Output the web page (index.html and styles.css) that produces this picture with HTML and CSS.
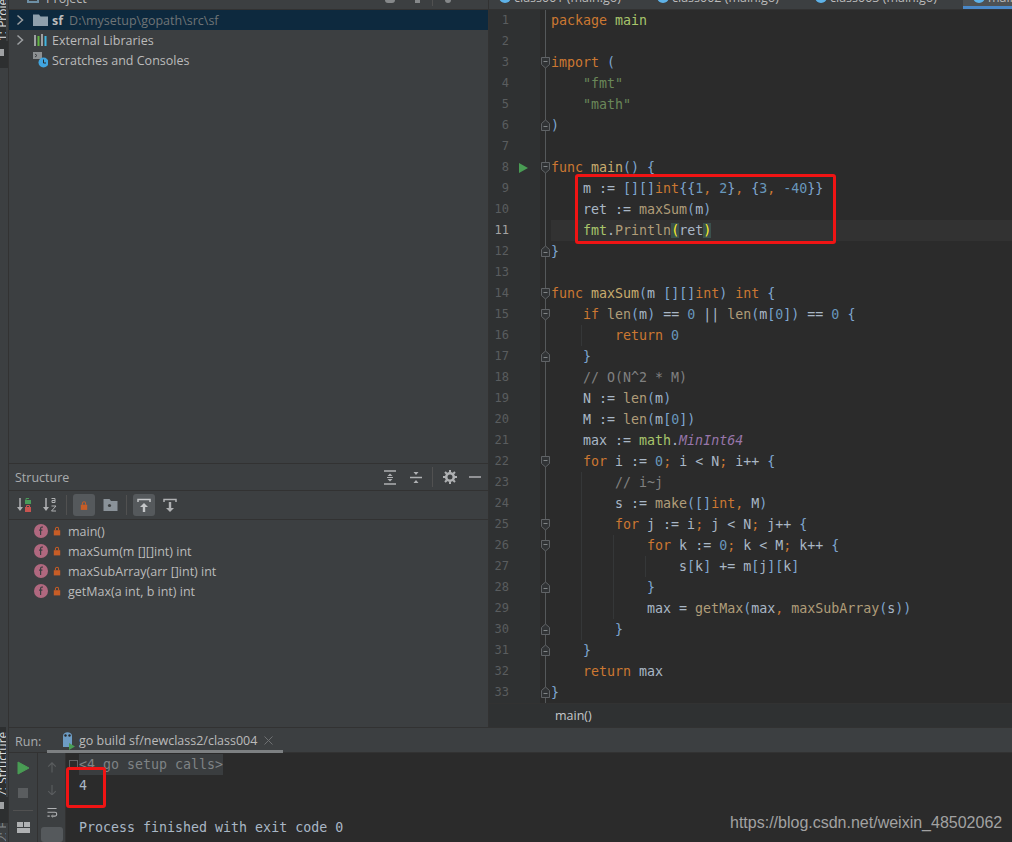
FILE: index.html
```html
<!DOCTYPE html>
<html lang="en">
<head>
    <meta charset="UTF-8">
    <title>sf - main.go</title>
    <link rel="stylesheet" href="styles.css">
</head>
<body>
    <svg class="defs" width="0" height="0">
        <symbol id="fo" viewBox="0 0 11 13"><path d="M1.500 1.500h8v7l-4 3.500-4-3.500z" fill="#313335" stroke="#606366"/><path d="M3.500 5.500h4" stroke="#808486"/></symbol>
        <symbol id="fc" viewBox="0 0 11 13"><path d="M1.500 11.500h8v-7l-4-3.500-4 3.500z" fill="#313335" stroke="#606366"/><path d="M3.500 7.500h4" stroke="#808486"/></symbol>
        <symbol id="fn" viewBox="0 0 16 16"><circle cx="8" cy="8" r="7" fill="#b0687f"/><path d="M9.900 4.200c-1.300-.3-2.300.1-2.300 1.500v6.200M6 7.200h3.400" fill="none" stroke="#3c3f41" stroke-width="1.200"/></symbol>
        <symbol id="lock" viewBox="0 0 10 12"><rect x="1" y="5" width="8" height="6.500" fill="#c75d26"/><path d="M3 5V3.400a2 2 0 0 1 4 0V5" fill="none" stroke="#c75d26" stroke-width="1.300"/></symbol>
    </svg>

    <div class="ide">
        <div class="top">
            <aside class="stripe">
                <div class="stripe-tab stripe-project"><span>1: Project</span></div>
                <div class="stripe-tail tail-project"><div class="stripe-square"></div></div>
            </aside>

            <div class="side">
                <div class="panel-cut">
                    <svg class="cut-icon" width="12" height="8" viewBox="0 0 12 8"><path d="M1 0v7h10V0" fill="none" stroke="#6d8fa5" stroke-width="2"/></svg>
                    <span class="cut-text">Project</span>
                    <span class="cut-spacer"></span>
                    <span class="cut-dot dot-a"></span>
                    <span class="cut-dot dot-b"></span>
                    <span class="cut-dot dot-sep"></span>
                    <span class="cut-dot dot-c"></span>
                </div>

                <div class="tree">
                    <div class="tree-row selected">
                        <svg class="chev" width="8" height="12" viewBox="0 0 8 12"><path d="M1.500 1.500 6.500 6l-5 4.500" fill="none" stroke="#9da0a2" stroke-width="1.500"/></svg>
                        <svg class="tree-icon" width="15" height="14" viewBox="0 0 15 14"><path d="M0 1.500h6l1.500 2H15V13H0z" fill="#90a0ac"/></svg>
                        <b>sf</b><span class="path">D:\mysetup\gopath\src\sf</span>
                    </div>
                    <div class="tree-row">
                        <svg class="chev" width="8" height="12" viewBox="0 0 8 12"><path d="M1.500 1.500 6.500 6l-5 4.500" fill="none" stroke="#9da0a2" stroke-width="1.500"/></svg>
                        <svg class="tree-icon" width="15" height="14" viewBox="0 0 15 14"><path d="M1 2h2v11H1z" fill="#9da0a2"/><path d="M4.500 3h2v10h-2z" fill="#62b543"/><path d="M8 1h2v12H8z" fill="#9da0a2"/><path d="M11.500 3h2v10h-2z" fill="#40b6e0"/></svg>
                        <span>External Libraries</span>
                    </div>
                    <div class="tree-row">
                        <span class="chev-gap"></span>
                        <svg class="tree-icon" width="15" height="16" viewBox="0 0 15 16"><path d="M0 0h9v7H0z" fill="#8c9092"/><path d="m2 2 2 1.500L2 5" fill="none" stroke="#3c3f41"/><circle cx="10.500" cy="10.500" r="5" fill="#40a5e0"/><path d="M10.500 7.500v3.500h2.500" fill="none" stroke="#2b2b2b"/></svg>
                        <span>Scratches and Consoles</span>
                    </div>
                </div>

                <section class="structure">
                    <div class="panel-head">
                        <span class="panel-title">Structure</span>
                        <span class="cut-spacer"></span>
                        <svg class="head-icon" width="14" height="15" viewBox="0 0 14 15"><path d="M1 1h12M1 14h12" stroke="#afb1b3" stroke-width="1.500"/><path d="M4.500 6 7 3.500 9.500 6zM4.500 9 7 11.500 9.500 9z" fill="#afb1b3"/><path d="M4 7.500h6" stroke="#afb1b3"/></svg>
                        <svg class="head-icon" width="14" height="15" viewBox="0 0 14 15"><path d="M1 7.500h12" stroke="#afb1b3" stroke-width="1.500"/><path d="M4.500 2 7 5 9.500 2zM4.500 13 7 10 9.500 13z" fill="#afb1b3"/></svg>
                        <span class="head-sep"></span>
                        <svg class="head-icon" width="14" height="14" viewBox="0 0 14 14"><circle cx="7" cy="7" r="3.800" fill="none" stroke="#afb1b3" stroke-width="2.600"/><path d="M7 0v2.500M7 11.500V14M0 7h2.500M11.500 7H14M2 2l1.800 1.800M10.200 10.200 12 12M12 2l-1.800 1.800M3.800 10.200 2 12" stroke="#afb1b3" stroke-width="2"/></svg>
                        <svg class="head-icon" width="12" height="14" viewBox="0 0 12 14"><path d="M0 7h12" stroke="#afb1b3" stroke-width="1.500"/></svg>
                    </div>

                    <div class="tools">
                        <span class="tool">
                            <svg width="16" height="16" viewBox="0 0 16 16"><path d="M4 1v11" stroke="#afb1b3" stroke-width="1.500"/><path d="M1 10h6l-3 4z" fill="#afb1b3"/><rect x="9" y="3" width="6" height="4" fill="#4a9c5a"/><path d="M10 3V1.500h3" fill="none" stroke="#4a9c5a"/><rect x="9" y="10" width="6" height="5" fill="#c75450"/><path d="M10.500 10V8.500h3V10" fill="none" stroke="#c75450"/></svg>
                        </span>
                        <span class="tool">
                            <svg width="16" height="16" viewBox="0 0 16 16"><path d="M4 1v11" stroke="#afb1b3" stroke-width="1.500"/><path d="M1 10h6l-3 4z" fill="#afb1b3"/><path d="M9.500 1.500h3.500v4M13 3.500h-3v2h3M9.500 9h4.500l-4.500 5H14" fill="none" stroke="#afb1b3"/></svg>
                        </span>
                        <span class="tool-sep"></span>
                        <span class="tool on">
                            <svg width="8" height="11" viewBox="0 0 10 12"><use href="#lock"/></svg>
                        </span>
                        <span class="tool">
                            <svg width="15" height="12" viewBox="0 0 14 12"><path d="M0 0h6l1.500 2H14v10H0z" fill="#8a9299"/><circle cx="6" cy="6.500" r="1.600" fill="#3c3f41"/></svg>
                        </span>
                        <span class="tool-sep"></span>
                        <span class="tool on">
                            <svg width="14" height="15" viewBox="0 0 14 15"><path d="M1 4V1.500h12V4" fill="none" stroke="#c4c6c8" stroke-width="1.500"/><path d="M7 5 3 9h2.800v5h2.400V9H11z" fill="#c4c6c8"/></svg>
                        </span>
                        <span class="tool">
                            <svg width="14" height="15" viewBox="0 0 14 15"><path d="M1 4V1.500h12V4" fill="none" stroke="#afb1b3" stroke-width="1.500"/><path d="M5.800 4h2.400v6H11l-4 4-4-4h2.800z" fill="#afb1b3"/></svg>
                        </span>
                    </div>

                    <ul class="members">
                        <li><svg width="16" height="16"><use href="#fn"/></svg><svg class="member-lock"><use href="#lock"/></svg>main()</li>
                        <li><svg width="16" height="16"><use href="#fn"/></svg><svg class="member-lock"><use href="#lock"/></svg>maxSum(m [][]int) int</li>
                        <li><svg width="16" height="16"><use href="#fn"/></svg><svg class="member-lock"><use href="#lock"/></svg>maxSubArray(arr []int) int</li>
                        <li><svg width="16" height="16"><use href="#fn"/></svg><svg class="member-lock"><use href="#lock"/></svg>getMax(a int, b int) int</li>
                    </ul>
                </section>
            </div>

            <main class="editor">
                <div class="tabs">
                    <div class="tab"><i></i><span>class001 (main.go)</span></div>
                    <div class="tab"><i></i><span>class002 (main.go)</span></div>
                    <div class="tab"><i></i><span>class003 (main.go)</span></div>
                    <div class="tab active"><i></i><span>main.go</span></div>
                </div>

                <div class="code">
                    <div class="ln"><span class="num">1</span><span class="mark"></span><span class="fold"></span><code><span class="k">package</span> <span class="g">main</span></code></div>
                    <div class="ln"><span class="num">2</span><span class="mark"></span><span class="fold"></span><code></code></div>
                    <div class="ln"><span class="num">3</span><span class="mark"></span><span class="fold"><svg><use href="#fo"/></svg></span><code><span class="k">import</span> <span class="b">(</span></code></div>
                    <div class="ln"><span class="num">4</span><span class="mark"></span><span class="fold"></span><code>    <span class="s">"fmt"</span></code></div>
                    <div class="ln"><span class="num">5</span><span class="mark"></span><span class="fold"></span><code>    <span class="s">"math"</span></code></div>
                    <div class="ln"><span class="num">6</span><span class="mark"></span><span class="fold"><svg><use href="#fc"/></svg></span><code><span class="b">)</span></code></div>
                    <div class="ln"><span class="num">7</span><span class="mark"></span><span class="fold"></span><code></code></div>
                    <div class="ln"><span class="num">8</span><span class="mark"><svg width="9" height="10" viewBox="0 0 9 10"><path d="M0 0l9 5-9 5z" fill="#499c54"/></svg></span><span class="fold"><svg><use href="#fo"/></svg></span><code><span class="k">func</span> <span class="f">main</span><span class="b">()</span> <span class="b">{</span></code></div>
                    <div class="ln"><span class="num">9</span><span class="mark"></span><span class="fold"></span><code>    m := <span class="b">[][]</span><span class="k">int</span><span class="b">{{</span><span class="n">1</span><span class="k">,</span> <span class="n">2</span><span class="b">}</span><span class="k">,</span> <span class="b">{</span><span class="n">3</span><span class="k">,</span> <span class="n">-40</span><span class="b">}}</span></code></div>
                    <div class="ln"><span class="num">10</span><span class="mark"></span><span class="fold"></span><code>    ret := <span class="c">maxSum</span><span class="b">(</span>m<span class="b">)</span></code></div>
                    <div class="ln current"><span class="num">11</span><span class="mark"></span><span class="fold"></span><code>    <span class="g">fmt</span>.<span class="c">Println</span><span class="match">(</span>ret<span class="match">)</span></code></div>
                    <div class="ln"><span class="num">12</span><span class="mark"></span><span class="fold"><svg><use href="#fc"/></svg></span><code><span class="b">}</span></code></div>
                    <div class="ln"><span class="num">13</span><span class="mark"></span><span class="fold"></span><code></code></div>
                    <div class="ln"><span class="num">14</span><span class="mark"></span><span class="fold"><svg><use href="#fo"/></svg></span><code><span class="k">func</span> <span class="f">maxSum</span><span class="b">(</span>m <span class="b">[][]</span><span class="k">int</span><span class="b">)</span> <span class="k">int</span> <span class="b">{</span></code></div>
                    <div class="ln"><span class="num">15</span><span class="mark"></span><span class="fold"><svg><use href="#fo"/></svg></span><code>    <span class="k">if</span> <span class="c">len</span><span class="b">(</span>m<span class="b">)</span> == <span class="n">0</span> || <span class="c">len</span><span class="b">(</span>m<span class="b">[</span><span class="n">0</span><span class="b">])</span> == <span class="n">0</span> <span class="b">{</span></code></div>
                    <div class="ln i1"><span class="num">16</span><span class="mark"></span><span class="fold"></span><code>        <span class="k">return</span> <span class="n">0</span></code></div>
                    <div class="ln"><span class="num">17</span><span class="mark"></span><span class="fold"><svg><use href="#fc"/></svg></span><code>    <span class="b">}</span></code></div>
                    <div class="ln"><span class="num">18</span><span class="mark"></span><span class="fold"></span><code>    <span class="r">// O(N^2 * M)</span></code></div>
                    <div class="ln"><span class="num">19</span><span class="mark"></span><span class="fold"></span><code>    N := <span class="c">len</span><span class="b">(</span>m<span class="b">)</span></code></div>
                    <div class="ln"><span class="num">20</span><span class="mark"></span><span class="fold"></span><code>    M := <span class="c">len</span><span class="b">(</span>m<span class="b">[</span><span class="n">0</span><span class="b">])</span></code></div>
                    <div class="ln"><span class="num">21</span><span class="mark"></span><span class="fold"></span><code>    max := <span class="g">math</span>.<span class="v">MinInt64</span></code></div>
                    <div class="ln"><span class="num">22</span><span class="mark"></span><span class="fold"><svg><use href="#fo"/></svg></span><code>    <span class="k">for</span> i := <span class="n">0</span><span class="k">;</span> i &lt; N<span class="k">;</span> i++ <span class="b">{</span></code></div>
                    <div class="ln i1"><span class="num">23</span><span class="mark"></span><span class="fold"></span><code>        <span class="r">// i~j</span></code></div>
                    <div class="ln i1"><span class="num">24</span><span class="mark"></span><span class="fold"></span><code>        s := <span class="c">make</span><span class="b">([]</span><span class="k">int,</span> M<span class="b">)</span></code></div>
                    <div class="ln i1"><span class="num">25</span><span class="mark"></span><span class="fold"><svg><use href="#fo"/></svg></span><code>        <span class="k">for</span> j := i<span class="k">;</span> j &lt; N<span class="k">;</span> j++ <span class="b">{</span></code></div>
                    <div class="ln i2"><span class="num">26</span><span class="mark"></span><span class="fold"><svg><use href="#fo"/></svg></span><code>            <span class="k">for</span> k := <span class="n">0</span><span class="k">;</span> k &lt; M<span class="k">;</span> k++ <span class="b">{</span></code></div>
                    <div class="ln i3"><span class="num">27</span><span class="mark"></span><span class="fold"></span><code>                s<span class="b">[</span>k<span class="b">]</span> += m<span class="b">[</span>j<span class="b">][</span>k<span class="b">]</span></code></div>
                    <div class="ln i2"><span class="num">28</span><span class="mark"></span><span class="fold"><svg><use href="#fc"/></svg></span><code>            <span class="b">}</span></code></div>
                    <div class="ln i2"><span class="num">29</span><span class="mark"></span><span class="fold"></span><code>            max = <span class="c">getMax</span><span class="b">(</span>max<span class="k">,</span> <span class="c">maxSubArray</span><span class="b">(</span>s<span class="b">))</span></code></div>
                    <div class="ln i1"><span class="num">30</span><span class="mark"></span><span class="fold"><svg><use href="#fc"/></svg></span><code>        <span class="b">}</span></code></div>
                    <div class="ln"><span class="num">31</span><span class="mark"></span><span class="fold"><svg><use href="#fc"/></svg></span><code>    <span class="b">}</span></code></div>
                    <div class="ln"><span class="num">32</span><span class="mark"></span><span class="fold"></span><code>    <span class="k">return</span> max</code></div>
                    <div class="ln"><span class="num">33</span><span class="mark"></span><span class="fold"><svg><use href="#fc"/></svg></span><code><span class="b">}</span></code></div>
                </div>

                <div class="crumbs">main()</div>
            </main>
        </div>

        <div class="run">
            <aside class="stripe">
                <div class="stripe-tab stripe-run"><span>7: Structure</span></div>
                <div class="stripe-tail tail-run"><div class="stripe-square"></div></div>
                <div class="stripe-tab stripe-fav"><span>2: Favorites</span></div>
            </aside>
            <div class="run-main">
                <div class="run-head">
                    <span class="run-label">Run:</span>
                    <div class="run-tab">
                        <svg width="14" height="18" viewBox="0 0 14 18"><path d="M2 4c0-5 9-5 9 0v11H2z" fill="#6d9cc4"/><circle cx="4.500" cy="3.500" r="1.200" fill="#2b2b2b"/><circle cx="8.500" cy="3.500" r="1.200" fill="#2b2b2b"/><path d="M8 11l6 3.500L8 18z" fill="#499c54"/></svg>
                        <span>go build sf/newclass2/class004</span>
                        <svg class="tab-close" width="9" height="9" viewBox="0 0 9 9"><path d="M.5.500l8 8M8.500.500l-8 8" stroke="#6e7072"/></svg>
                    </div>
                </div>
                <div class="run-body">
                    <div class="run-bar">
                        <svg width="13" height="14" viewBox="0 0 13 14"><path d="M1 1l11 6-11 6z" fill="#499c54" stroke="#499c54"/></svg>
                        <svg width="12" height="12" viewBox="0 0 12 12"><rect width="10" height="10" x="1" y="1" fill="#5a5d5f"/></svg>
                        <span class="bar-line"></span>
                        <svg width="13" height="11" viewBox="0 0 13 11"><path d="M0 0h6v5H0zM7 0h6v5H7zM0 6h13v5H0z" fill="#afb1b3"/></svg>
                    </div>
                    <div class="run-bar run-bar2">
                        <svg width="12" height="14" viewBox="0 0 12 14"><path d="M6 1v13M1 6l5-5 5 5" fill="none" stroke="#5a5d5f" stroke-width="1.500"/></svg>
                        <svg width="12" height="14" viewBox="0 0 12 14"><path d="M6 0v13M1 8l5 5 5-5" fill="none" stroke="#5a5d5f" stroke-width="1.500"/></svg>
                        <svg width="14" height="14" viewBox="0 0 14 14"><path d="M1 2h12M1 7h10c3 0 3 5 0 5H7M1 12h3" fill="none" stroke="#afb1b3" stroke-width="1.500"/><path d="M8 10l-2 2 2 2" fill="none" stroke="#afb1b3"/></svg>
                        <span class="bar-pressed"></span>
                    </div>
                    <div class="console">
                        <div class="out out-setup"><span class="fold-box"></span><span class="setup">&lt;4 go setup calls&gt;</span></div>
                        <div class="out">4</div>
                        <div class="out"></div>
                        <div class="out">Process finished with exit code 0</div>
                    </div>
                </div>
            </div>
        </div>

        <div class="red-box box-code"></div>
        <div class="red-box box-output"></div>
        <div class="watermark">https://blog.csdn.net/weixin_48502062</div>
    </div>
</body>
</html>
```

FILE: styles.css
```css
* {
    box-sizing: border-box;
}
body {
    margin: 0;
    background: #2b2b2b;
    font-family: "Open Sans", "Noto Sans", sans-serif;
    font-size: 12.5px;
    color: #bbbbbb;
}
.defs {
    position: absolute;
}
.ide {
    position: relative;
    width: 1012px;
    height: 842px;
    overflow: hidden;
    display: flex;
    flex-direction: column;
}
.top {
    display: flex;
    height: 727px;
}

/* left tool stripe */
.stripe {
    width: 9px;
    flex: none;
    background: #3c3f41;
    border-right: 1px solid #323232;
    overflow: hidden;
}
.stripe-tab {
    background: #2d2f30;
    color: #dddddd;
    writing-mode: vertical-rl;
    transform: rotate(180deg);
    font-size: 12px;
    line-height: 6px;
    white-space: nowrap;
    overflow: hidden;
}
.stripe-project {
    height: 41px;
}
.stripe-tail {
    background: #2d2f30;
}
.tail-project {
    height: 27px;
    padding-top: 8px;
}
.stripe-square {
    width: 4px;
    height: 7px;
    background: #a0a2a4;
}
.stripe-run {
    height: 70px;
}
.tail-run {
    height: 26px;
    padding-top: 5px;
}
.stripe-fav {
    height: 19px;
    background: #3c3f41;
    color: #85888a;
}

/* project panel */
.side {
    width: 480px;
    flex: none;
    display: flex;
    flex-direction: column;
    background: #3c3f41;
    border-right: 1px solid #323232;
}
.panel-cut {
    height: 10px;
    flex: none;
    display: flex;
    align-items: flex-end;
    padding: 0 0 5px 18px;
    border-bottom: 1px solid #323232;
    white-space: nowrap;
}
.cut-icon {
    margin-right: 7px;
    margin-bottom: 1px;
}
.cut-text {
    margin-bottom: -3px;
}
.cut-spacer {
    flex: 1;
}
.cut-dot {
    align-self: flex-start;
    height: 3px;
    background: #85888a;
}
.dot-a {
    width: 10px;
    margin-right: 20px;
    border-radius: 0 0 5px 5px;
}
.dot-b {
    width: 5px;
    margin-right: 12px;
}
.dot-sep {
    width: 1px;
    height: 6px;
    margin-right: 12px;
    background: #515151;
}
.dot-c {
    width: 6px;
    margin-right: 37px;
    border-radius: 0 0 3px 3px;
}
.tree {
    flex: 1;
}
.tree-row {
    height: 20px;
    display: flex;
    align-items: center;
    padding-left: 7px;
    white-space: nowrap;
}
.tree-row.selected {
    background: #0d293e;
}
.chev, .chev-gap {
    width: 8px;
    flex: none;
    margin-right: 9px;
}
.tree-icon {
    flex: none;
    margin-right: 4px;
}
.tree-row b {
    margin-right: 6px;
}
.path {
    color: #6f7476;
}

/* structure panel */
.structure {
    flex: none;
    height: 264px;
    border-top: 1px solid #323232;
}
.panel-head {
    height: 27px;
    display: flex;
    align-items: center;
    padding: 0 7px 0 6px;
    border-bottom: 1px solid #323232;
}
.panel-title {
    color: #a9acae;
}
.head-icon {
    flex: none;
    margin-left: 12px;
}
.head-sep {
    width: 1px;
    height: 20px;
    margin-left: 9px;
    background: #515151;
}
.head-sep + .head-icon {
    margin-left: 10px;
}
.tools {
    height: 29px;
    display: flex;
    align-items: center;
    padding-left: 4px;
    border-bottom: 1px solid #323232;
}
.tool {
    width: 22px;
    height: 22px;
    margin-right: 4px;
    display: flex;
    align-items: center;
    justify-content: center;
    border-radius: 3px;
}
.tool.on {
    background: #55595c;
}
.tool-sep {
    width: 1px;
    height: 20px;
    margin: 0 6px 0 1px;
    background: #515151;
}
.members {
    list-style: none;
    margin: 0;
    padding: 1px 0 0 24px;
}
.members li {
    height: 20px;
    display: flex;
    align-items: center;
    white-space: nowrap;
}
.member-lock {
    width: 8px;
    height: 10px;
    margin: 0 7px 0 4px;
}

/* editor */
.editor {
    flex: 1;
    min-width: 0;
    display: flex;
    flex-direction: column;
    background: #2b2b2b;
}
.tabs {
    height: 10px;
    flex: none;
    display: flex;
    background: #3c3f41;
    border-bottom: 1px solid #323232;
    overflow: hidden;
}
.tab {
    width: 158px;
    flex: none;
    height: 9px;
    padding-left: 10px;
    padding-bottom: 6px;
    display: flex;
    align-items: flex-end;
    white-space: nowrap;
}
.tab i {
    width: 12px;
    height: 12px;
    flex: none;
    margin-right: 3px;
    border-radius: 50%;
    background: #5eb2e8;
}
.tab span {
    margin-bottom: -3px;
}
.tab.active {
    width: 60px;
    background: #4e5254;
    border-bottom: 3px solid #4a88c7;
    padding-bottom: 3px;
}
.code {
    flex: 1;
    font-family: "DejaVu Sans Mono", "Liberation Mono", monospace;
    font-size: 13.3px;
    color: #a9b7c6;
}
.ln {
    height: 21px;
    display: flex;
}
.ln code {
    flex: 1;
    font: inherit;
    line-height: 21px;
    white-space: pre;
}
/* indent guides, one per nesting level */
.i1 code {
    background: linear-gradient(#353738, #353738) 30px 0 / 1px 100% no-repeat;
}
.i2 code {
    background: linear-gradient(#353738, #353738) 30px 0 / 1px 100% no-repeat,
                linear-gradient(#353738, #353738) 62px 0 / 1px 100% no-repeat;
}
.i3 code {
    background: linear-gradient(#353738, #353738) 30px 0 / 1px 100% no-repeat,
                linear-gradient(#353738, #353738) 62px 0 / 1px 100% no-repeat,
                linear-gradient(#353738, #353738) 94px 0 / 1px 100% no-repeat;
}
.num {
    width: 20px;
    flex: none;
    background: #2f3132;
    color: #5a5d5f;
    font-size: 12px;
    line-height: 21px;
    text-align: right;
}
.mark {
    width: 31px;
    flex: none;
    background: #2f3132;
    padding: 6px 0 0 10px;
    line-height: 0;
}
.fold {
    width: 11px;
    flex: none;
    background: linear-gradient(#55585a, #55585a) 5px 0 / 1px 100% no-repeat #2b2b2b;
    line-height: 0;
}
.fold svg {
    width: 11px;
    height: 13px;
    margin-top: 4px;
}
.current code {
    background: #323232;
}
.current .num {
    color: #a4a3a3;
}
.k { color: #cc7832; }
.g { color: #a8c56b; }
.s { color: #6a8759; }
.f { color: #c8ab6e; }
.c { color: #b09d79; }
.n { color: #6897bb; }
.b { color: #7ea6d0; }
.r { color: #808080; }
.v { color: #9876aa; font-style: italic; }
.match {
    background: #3b514d;
    color: #ffef28;
}
.crumbs {
    height: 24px;
    flex: none;
    padding-left: 66px;
    background: #2f3132;
    border-top: 1px solid #323232;
    line-height: 23px;
    color: #c5c8ca;
}

/* run panel */
.run {
    height: 115px;
    flex: none;
    display: flex;
    background: #3c3f41;
}
.run-main {
    flex: 1;
    min-width: 0;
    display: flex;
    flex-direction: column;
}
.run-head {
    height: 26px;
    flex: none;
    display: flex;
    align-items: center;
    padding-left: 6px;
    border-top: 1px solid #323232;
    border-bottom: 1px solid #323232;
}
.run-label {
    width: 32px;
    flex: none;
    margin-top: 2px;
    color: #a9acae;
}
.run-tab {
    height: 25px;
    display: flex;
    align-items: center;
    gap: 4px;
    padding: 4px 10px 0 14px;
    border-bottom: 3px solid #7d8082;
    white-space: nowrap;
}
.tab-close {
    margin-left: 3px;
}
.run-body {
    flex: 1;
    display: flex;
    min-height: 0;
}
.run-bar {
    width: 29px;
    flex: none;
    display: flex;
    flex-direction: column;
    align-items: center;
    gap: 12px;
    padding-top: 8px;
    border-right: 1px solid #323232;
}
.run-bar2 {
    width: 28px;
    padding-top: 9px;
}
.bar-line {
    width: 20px;
    height: 1px;
    margin: -1px 0;
    background: #515151;
}
.bar-pressed {
    width: 22px;
    height: 20px;
    margin-top: -3px;
    border-radius: 3px;
    background: #55595c;
}
.console {
    flex: 1;
    min-width: 0;
    padding-top: 1px;
    background: #2b2b2b;
    font-family: "DejaVu Sans Mono", "Liberation Mono", monospace;
    font-size: 13.3px;
    color: #a9b7c6;
}
.out {
    height: 21px;
    padding-left: 13px;
    line-height: 21px;
    white-space: pre;
}
.out-setup {
    display: flex;
    align-items: center;
    padding-left: 3px;
}
.fold-box {
    width: 9px;
    height: 9px;
    margin-right: 1px;
    border: 1px solid #606366;
}
.setup {
    background: #3a3d3f;
    color: #7f8385;
}

/* annotations drawn over the screenshot */
.red-box {
    position: absolute;
    border: 3px solid #f01414;
    border-radius: 3px;
}
.box-code {
    left: 575px;
    top: 174px;
    width: 261px;
    height: 70px;
}
.box-output {
    left: 66px;
    top: 767px;
    width: 40px;
    height: 41px;
}
.watermark {
    position: absolute;
    left: 730px;
    top: 814px;
    font-family: "Liberation Sans", Arial, sans-serif;
    font-size: 16px;
    color: #a2a2a2;
    white-space: nowrap;
}
```
